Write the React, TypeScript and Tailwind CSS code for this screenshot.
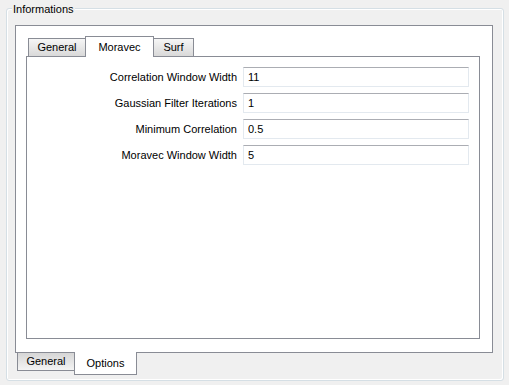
const fields = [
  { label: "Correlation Window Width", value: "11" },
  { label: "Gaussian Filter Iterations", value: "1" },
  { label: "Minimum Correlation", value: "0.5" },
  { label: "Moravec Window Width", value: "5" },
]

function TopTab({ label, width, selected }: { label: string; width: string; selected?: boolean }) {
  if (selected) {
    return (
      <div className={`${width} -ml-[1px] h-[21px] border border-b-0 border-[#898c95] bg-white flex items-center justify-center`}>
        {label}
      </div>
    )
  }
  return (
    <div className={`${width} -ml-[1px] first:ml-0 h-[19px] border border-[#898c95] bg-linear-to-b from-[#f6f6f6] to-[#d9d9d9] flex items-center justify-center`}>
      {label}
    </div>
  )
}

export default function App() {
  return (
    <div className="w-[509px] h-[385px] bg-[#f0f0f0] pt-[8px] pl-[6px] font-['Liberation_Sans',Arial,sans-serif] text-[11px] text-black">
      <div className="relative w-[498px] h-[373px] border border-[#d5dfe5] rounded-[3px] shadow-[inset_1px_1px_0_#fff,inset_-1px_-1px_0_#fff] pt-[16px] pl-[8px]">
        <span className="absolute left-[5px] -top-[7px] bg-[#f0f0f0] px-[1px] leading-[14px]">Informations</span>

        <div className="w-[478px] h-[328px] border border-[#898c95] bg-white pt-[10px] pl-[10px]">
          <div className="relative z-10 h-[21px] flex items-end pl-[2px]">
            <TopTab label="General" width="w-[58px]" />
            <TopTab label="Moravec" width="w-[69px]" selected />
            <TopTab label="Surf" width="w-[41px]" />
          </div>
          <div className="-mt-[1px] w-[454px] h-[283px] border border-[#898c95] bg-white pt-[10px]">
            <div className="flex flex-col gap-[6px]">
              {fields.map((f) => (
                <div key={f.label} className="flex items-center h-[20px]">
                  <span className="w-[210px] text-right">{f.label}</span>
                  <input
                    readOnly
                    defaultValue={f.value}
                    className="ml-[6px] w-[226px] h-[20px] border border-[#e3e9ef] border-t-[#abadb3] bg-white pl-[4px] text-[11px] outline-none"
                  />
                </div>
              ))}
            </div>
          </div>
        </div>

        <div className="relative -mt-[1px] flex items-start pl-[2px]">
          <div className="w-[58px] h-[19px] border border-[#898c95] bg-linear-to-b from-[#d6d6d6] to-[#f4f4f4] flex items-center justify-center">
            General
          </div>
          <div className="-ml-[1px] w-[63px] h-[23px] border border-t-0 border-[#898c95] bg-white flex items-center justify-center">
            Options
          </div>
        </div>
      </div>
    </div>
  )
}
